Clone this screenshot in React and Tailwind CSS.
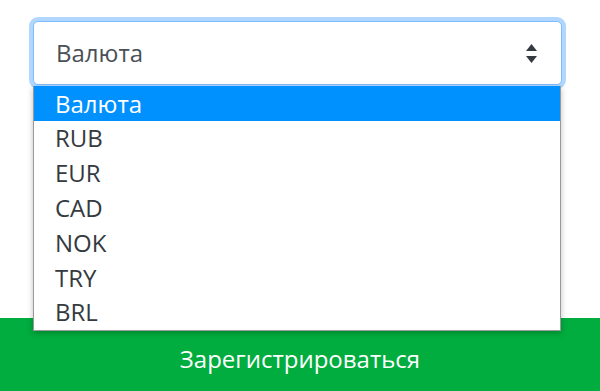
import React from "react";

const options = ["Валюта", "RUB", "EUR", "CAD", "NOK", "TRY", "BRL"];

const SortArrows = () => (
  <svg width="11" height="19" viewBox="0 0 11 19" className="text-[#343a40]">
    <path d="M5.5 0 L11 7 H0 Z" fill="currentColor" />
    <path d="M5.5 19 L11 12 H0 Z" fill="currentColor" />
  </svg>
);

const App = () => {
  return (
    <div
      className="relative w-[600px] h-[391px] overflow-hidden bg-white flex flex-col"
      style={{ fontFamily: '"Source Sans Pro", "Open Sans", sans-serif' }}
    >
      <div className="pl-[33px] pt-[21px]">
        <div className="w-[529px] h-[64px] rounded-[5px] border border-[#80bdff] bg-white shadow-[0_0_0_4px_rgba(0,123,255,0.3)] flex items-center justify-between pl-[22px] pr-[24px]">
          <span className="text-[24px] text-[#495057]">Валюта</span>
          <SortArrows />
        </div>
      </div>

      <div className="flex-1" />

      <button className="h-[73px] w-full bg-[#00ad3e] text-white text-[24px] flex items-center justify-center pt-[8px]">
        Зарегистрироваться
      </button>

      <ul className="absolute left-[33px] top-[86px] w-[528px] border border-[#9a9a9a] border-t-0 bg-white shadow-[0_2px_6px_rgba(0,0,0,0.25)]">
        {options.map((o, i) => (
          <li
            key={o}
            className={
              i === 0
                ? "h-[35px] flex items-center pl-[21px] text-[24px] bg-[#0091ff] text-white"
                : "h-[34.8px] flex items-center pl-[21px] text-[24px] text-[#343a40]"
            }
          >
            {o}
          </li>
        ))}
      </ul>
    </div>
  );
};

export default App;
